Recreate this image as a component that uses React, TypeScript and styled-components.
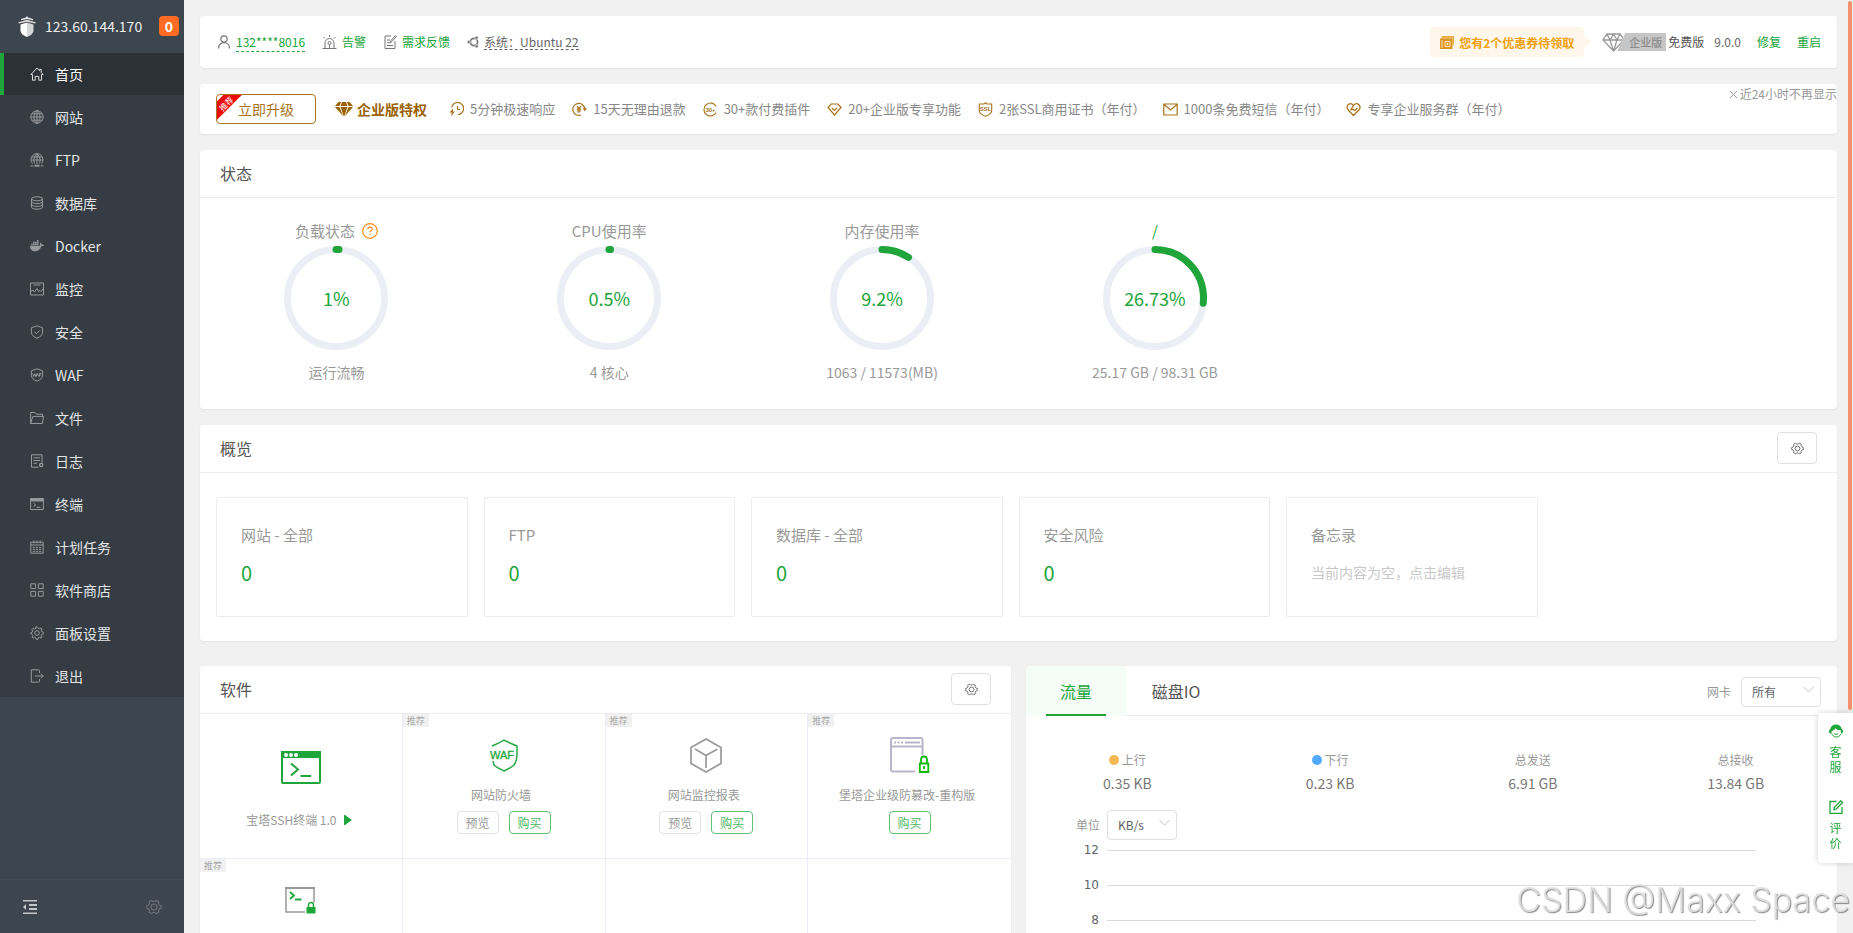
import React from "react";
import styled, { createGlobalStyle } from "styled-components";

const GREEN = "#20a53a";
const GOLD = "#a9741d";

const GlobalStyle = createGlobalStyle`
  * { box-sizing: border-box; }
  body {
    margin: 0;
    background: #f1f1f1;
    color: #666;
    font-family: "Noto Sans CJK SC", sans-serif;
    font-size: 12px;
    line-height: 20px;
  }
  button, select { font-family: inherit; margin: 0; }
  a { color: inherit; text-decoration: none; }
  svg { display: block; flex: none; }
  h2, ul, p { margin: 0; padding: 0; }
`;

/* ---------- icons ---------- */

type IconProps = { size?: number; children: React.ReactNode; sw?: number; box?: string };

const Line = ({ size = 14, sw = 1, box = "0 0 14 14", children }: IconProps) => (
  <svg width={size} height={size} viewBox={box} fill="none" stroke="currentColor" strokeWidth={sw} aria-hidden="true">
    {children}
  </svg>
);

const IconText = styled.text`
  fill: currentColor;
  stroke: none;
  font-family: "Liberation Sans", sans-serif;
  font-size: 6px;
  font-weight: 700;
  text-anchor: middle;
`;

const HexGear = ({ size = 14 }: { size?: number }) => (
  <Line size={size}>
    <path d="M5 1.2 6 2.2h2l1-1 2.2 1.3-.3 1.4 1 1.6 1.4.5v2l-1.4.5-1 1.6.3 1.4L9 12.8l-1-1H6l-1 1-2.2-1.3.3-1.4-1-1.6L.7 8V6l1.4-.5 1-1.6-.3-1.4z" />
    <circle cx="7" cy="7" r="2.6" />
  </Line>
);

const navIcons: Record<string, React.ReactNode> = {
  home: <Line><path d="M.8 7.6 7 1l2.6 2.7V2.4h1.6v3l2 2.2h-1.7v5.6H8.8V9.4H5.2v3.8H2.5V7.6z" /></Line>,
  site: <Line><circle cx="7" cy="7" r="6.2" /><ellipse cx="7" cy="7" rx="3" ry="6.2" /><path d="M7 .8v12.4M.8 7h12.4M1.8 3.8h10.4M1.8 10.2h10.4" /></Line>,
  ftp: <Line><path d="M2.4 10.500A6 6 0 1 1 11.6 10.500M4.600 10.500C3.200 7 4 3 7 1c3 2 3.800 6 2.400 9.500M7 1v10M1 7h12M2 4h10" /><path d="M.5 12.900h3M10.500 12.900h3" /><path d="M4.500 12.700h5" strokeWidth="2" /></Line>,
  db: <Line><ellipse cx="7" cy="2.800" rx="5.500" ry="2" /><path d="M1.500 2.800v8.400c0 1.100 2.500 2 5.500 2s5.500-.9 5.500-2V2.800M1.500 5.600c0 1.100 2.500 2 5.500 2s5.500-.9 5.500-2M1.500 8.400c0 1.100 2.500 2 5.500 2s5.500-.9 5.500-2" /></Line>,
  docker: (
    <svg width="14" height="14" viewBox="0 0 14 14" fill="currentColor" aria-hidden="true">
      <path d="M0 6.800h9.800c.5-.9.400-1.800 0-2.400l.6-.8c.8.500 1.200 1.200 1.200 1.900.8-.1 1.600 0 2.300.4-.5 1-1.500 1.400-2.600 1.400C10.200 10.600 8 12.300 5 12.300c-3.400 0-5-2.200-5-5.500z" />
      <path d="M1.200 4.700h1.600v1.600H1.200zM3.100 4.700h1.600v1.600H3.100zM5 4.700h1.600v1.600H5zM6.900 4.700h1.600v1.600H6.900zM3.100 2.800h1.600v1.600H3.100zM5 2.800h1.600v1.600H5zM6.900 2.800h1.600v1.600H6.900zM6.900.9h1.600v1.600H6.900z" />
    </svg>
  ),
  monitor: <Line><path d="M.5 1h13v12H.5zM3.500 3h7" /><path d="m1 9.500 2-1.500 1.500 2L7 6.500l1.500 3 1.500-1 1 1 2-2.500" /></Line>,
  security: <Line><path d="M7 .8 12.600 2.800v4.400c0 2.800-2.400 4.800-5.600 6-3.200-1.200-5.600-3.200-5.600-6V2.800z" /><path d="m4.500 6.800 2 1.900 3.300-3.300" /></Line>,
  waf: <Line><path d="M7 .8 12.600 2.800v4.400c0 2.800-2.400 4.800-5.600 6-3.200-1.200-5.600-3.200-5.600-6V2.800z" /><path d="m2.800 5.500.9 3 .9-2.600.9 2.600.9-3M6.300 8.500l1.100-3 1.100 3M9.400 8.800V5.500h2M9.400 7h1.800" /></Line>,
  folder: <Line><path d="M.6 12.500V1.500h4.500l1.400 1.700h6v2.200M.6 12.500 2.800 5.400h10.700l-1.100 7.100z" /></Line>,
  log: <Line><path d="M8.500 13.200H1.500V.8h10.500v8M3.500 3.800h6.500M3.500 6.500h6.500M3.500 9.200h3.500" /><circle cx="11.200" cy="11" r="1.600" strokeWidth="1.400" /></Line>,
  terminal: <Line><path d="M.6 1.500h12.800v11H.6z" /><path d="M.6 3h12.800" strokeWidth="3" /><path d="m3.500 6.300 2.200 1.700-2.200 1.700M6.500 10.300h4" /></Line>,
  cron: <Line><path d="M.8 2.200h12.400v11H.8zM3.800.4v3M10.200.4v3M7 .4v3M.8 5h12.400" /><path d="M2.800 7.400h8.400M2.800 9.400h8.400M2.800 11.400h8.400" strokeDasharray="2.200 .9" /></Line>,
  store: <Line><path d="M.8.800h4.800v4.800H.8zM8.400.800h4.800v4.800H8.400zM.8 8.400h4.800v4.800H.8zM8.400 8.400h4.800v4.800H8.400z" /></Line>,
  settings: <Line><circle cx="7" cy="7" r="2.300" /><path d="m5.700.9.3 1.500-1.500.7-1.400-.9-1.100 1.300.9 1.300-.6 1.400-1.500.4v1.300l1.500.4.600 1.400-.9 1.400 1.100 1.100 1.400-.9 1.500.7.3 1.400h1.600l.4-1.500 1.400-.6 1.400.9 1-1.200-.8-1.300.6-1.400 1.400-.4V6.100l-1.500-.4-.6-1.400.9-1.300-1.100-1.100-1.300.9-1.500-.7L7.300.9z" /></Line>,
  exit: <Line><path d="M9.500 4V1.500L8.700.8H1.300v12.400h7.400l.8-.7V10M5 7h8.300M11 4.700 13.300 7 11 9.300" /></Line>,
};

const perkIcons: Record<string, React.ReactNode> = {
  clock: <Line size={15} sw={1.200} box="0 0 15 15"><path d="M2.700 5.500A6 6 0 1 1 8.800 12.500" /><path d="M8.500 4v3.500h2.500" /><path d="M4 6.500 .6 10.500h2.200l-.8 4 3.800-5H4z" fill="currentColor" stroke="none" /></Line>,
  refund: <Line size={15} sw={1.200} box="0 0 15 15"><path d="M9 13A6 6 0 1 1 12.800 7.500" /><path d="m10.600 6.300 2.200 3 2.200-3z" fill="currentColor" stroke="none" /><path d="m5 4.200 1.900 2.500 1.900-2.500M4.700 7.200h4.400M4.700 9h4.400M6.900 6.700v4.200" /></Line>,
  plugins: <Line size={15} sw={1.100} box="0 0 15 15"><path d="M13.200 4.500A6.500 6.500 0 1 0 13.200 10.500" /><IconText x="7.500" y="9.700">30+</IconText></Line>,
  feature: <Line size={15} sw={1.200} box="0 0 15 15"><path d="M4 2h7l3 3.500L7.500 13 1 5.500zM5 6l2.500 2.500L10 6" /></Line>,
  ssl: <Line size={15} sw={1.100} box="0 0 15 15"><path d="M7.500.8 9 2h4.700v6.500c0 2.500-2.500 4.500-6.200 5.700C3.800 13 1.300 11 1.300 8.500V2H6z" /><IconText x="7.500" y="9">SSL</IconText></Line>,
  sms: <Line size={15} sw={1.200} box="0 0 15 15"><path d="M.8 2h13.400v11H.8zM1 2.500l6.500 5.500L14 2.500" /></Line>,
  group: <Line size={15} sw={1.300} box="0 0 15 15"><path d="M7.500 13.500 1.800 7.500C.4 5.500 1.200 2.500 3.600 1.800 5.300 1.400 6.500 2 7.500 3.500c1-1.500 2.500-2.100 4.200-1.600 2.200.7 3 3.600 1.600 5.600z" /><path d="M7.500 3.500 5 7.500h2.500l1.500 1 2.300-2.500" /></Line>,
};

const Lock = ({ x, y, color }: { x: number; y: number; color: string }) => (
  <g transform={`translate(${x} ${y})`}>
    <path d="M2.500 6V3.500a2.500 2.500 0 0 1 5 0V6" fill="none" stroke={color} strokeWidth="1.500" />
    <path d="M.500 5.500h9V12h-9z" fill={color} />
  </g>
);

const SshIcon = () => (
  <svg width="40" height="33" viewBox="0 0 40 33" aria-hidden="true">
    <rect x="1" y="1" width="38" height="31" rx="1" fill="#fff" stroke={GREEN} strokeWidth="2" />
    <path d="M0 0h40v7H0z" fill={GREEN} />
    <g fill="#fff"><circle cx="5" cy="4" r="2" /><circle cx="10" cy="4" r="2" /><circle cx="15" cy="4" r="2" /></g>
    <path d="m10 12.500 7 6-7 6M19.500 25h10.500" fill="none" stroke={GREEN} strokeWidth="2" />
  </svg>
);

const WafIcon = () => (
  <svg width="28" height="33" viewBox="0 0 28 33" aria-hidden="true">
    <path d="M2 7 9 4l5-3 6 3 7 3v9c0 4-1 7-3 10l-4 3-6 3-6-3-4-3-1-4" fill="none" stroke={GREEN} strokeWidth="1.400" />
    <text x="0" y="20" fill={GREEN} stroke={GREEN} strokeWidth=".3" fontFamily="Liberation Sans, sans-serif" fontSize="11">WAF</text>
  </svg>
);

const CubeIcon = () => (
  <svg width="32" height="35" viewBox="0 0 32 35" fill="none" stroke="#999" strokeWidth="1.700" aria-hidden="true">
    <path d="M16 1 31 9.500v16L16 34 1 25.500v-16zM5 11l11 6.500L27.500 11M16 17.500V30" />
  </svg>
);

const TamperIcon = () => (
  <svg width="40" height="36" viewBox="0 0 40 36" fill="none" aria-hidden="true">
    <path d="M32.500 18V3a2 2 0 0 0-2-2H3a2 2 0 0 0-2 2v29.500a2 2 0 0 0 2 2h22M1 9.500h31.500M15 5.500h15" stroke="#b9b5cb" strokeWidth="2" />
    <path d="M4 5.500h9" stroke="#b9b5cb" strokeWidth="2" strokeDasharray="2 1.500" />
    <path d="M31 26v-3.500a3 3 0 0 1 6 0V26M29.800 26.500h8.500V35h-8.500zM34 29v3" stroke="#12b812" strokeWidth="1.800" />
  </svg>
);

const SshLockIcon = () => (
  <svg width="31" height="27" viewBox="0 0 31 27" aria-hidden="true">
    <path d="M20 25H1V1h28v14" fill="none" stroke="#999" strokeWidth="1.500" />
    <path d="M0 1h30" stroke="#999" strokeWidth="2" />
    <path d="m5 5 4 3.500L5 12M10 12.500h6.500" fill="none" stroke={GREEN} strokeWidth="1.800" />
    <Lock x={21} y={14.500} color={GREEN} />
  </svg>
);

/* ---------- shell ---------- */

const Shell = styled.div`
  display: flex;
  height: 100vh;
  overflow: hidden;
`;

const Sidebar = styled.aside`
  flex: none;
  width: 184px;
  display: flex;
  flex-direction: column;
  background: #3d454e;
  color: #e6e6e6;
`;

const SideHead = styled.div`
  height: 53px;
  padding: 0 5px 1px 18px;
  display: flex;
  align-items: center;
  font-size: 14px;
  gap: 9px;
  color: #eee;
`;

const MsgCount = styled.button`
  width: 20px;
  height: 20px;
  margin-left: auto;
  padding: 0;
  border: 0;
  border-radius: 4px;
  background: #ff6b22;
  color: #fff;
  font-size: 14px;
  font-weight: 700;
  line-height: 20px;
`;

const NavList = styled.ul`
  list-style: none;
  background: #353c43;
  display: grid;
  gap: 1px;
`;

const NavLink = styled.a<{ $active?: boolean }>`
  display: flex;
  align-items: center;
  gap: 11px;
  height: 42px;
  padding-left: ${(p) => (p.$active ? 26 : 30)}px;
  border-left: ${(p) => (p.$active ? `4px solid ${GREEN}` : "0")};
  background: ${(p) => (p.$active ? "#2c3037" : "transparent")};
  color: ${(p) => (p.$active ? "#fff" : "#e3e5e6")};
  font-size: 14px;

  svg { color: ${(p) => (p.$active ? "#ddd" : "#969a9d")}; }
`;

const SideFoot = styled.div`
  margin-top: auto;
  height: 54px;
  padding: 0 22px;
  display: flex;
  align-items: center;
  justify-content: space-between;
  border-top: 1px solid #434c55;
`;

const PlainButton = styled.button<{ $color?: string }>`
  display: flex;
  align-items: center;
  padding: 0;
  border: 0;
  background: none;
  color: ${(p) => p.$color ?? "inherit"};
  font-size: 12px;
  line-height: 20px;
`;

const Main = styled.main`
  flex: 1;
  min-width: 0;
  padding: 16px 16px 0;
  display: flex;
  flex-direction: column;
  gap: 16px;
  overflow: hidden;
`;

const Card = styled.section`
  background: #fff;
  border-radius: 4px;
  box-shadow: 0 1px 2px rgba(0, 0, 0, 0.06);
`;

const CardHead = styled.header`
  display: flex;
  align-items: center;
  justify-content: space-between;
  height: 48px;
  padding: 0 20px 1px;
  border-bottom: 1px solid #ececec;
`;

const CardTitle = styled.h2`
  font-size: 16px;
  line-height: 24px;
  font-weight: 400;
  color: #555;
`;

const GearButton = styled.button`
  width: 40px;
  height: 32px;
  display: flex;
  align-items: center;
  justify-content: center;
  border: 1px solid #dcdfe6;
  border-radius: 4px;
  background: #fff;
  color: #666;
`;

/* ---------- top bar ---------- */

const TopBar = styled(Card)`
  height: 52px;
  flex: none;
  display: flex;
  align-items: center;
  justify-content: space-between;
  padding: 0 16px 0 17px;
`;

const TopGroup = styled.div<{ $gap: number }>`
  display: flex;
  align-items: center;
  gap: ${(p) => p.$gap}px;
`;

const TopItem = styled.a<{ $color?: string }>`
  display: flex;
  align-items: center;
  gap: 5px;
  color: ${(p) => p.$color ?? GREEN};

  svg { color: #777; }
`;

const Dashed = styled.span<{ $low?: boolean }>`
  line-height: ${(p) => (p.$low ? 18 : 14)}px;
  border-bottom: 1px dashed currentColor;
`;

const Coupon = styled.button`
  position: relative;
  display: flex;
  align-items: center;
  gap: 5px;
  height: 30px;
  margin-right: 18px;
  padding: 0 10px;
  border: 0;
  border-radius: 4px;
  background: #fff7ec;
  color: #f0a10c;
  font-size: 12px;
  font-weight: 700;

  &::after {
    content: "";
    position: absolute;
    left: 100%;
    top: 9px;
    border: 6px solid transparent;
    border-left: 8px solid #fff7ec;
    border-right: 0;
  }
`;

const Edition = styled.div`
  display: flex;
  align-items: center;
  margin-right: 10px;
  color: #555;
`;

const EditionTag = styled.span`
  height: 18px;
  margin: 0 2px 0 -8px;
  padding: 0 4px 0 12px;
  background: #c6c6c6;
  clip-path: polygon(8px 0, 100% 0, 100% 100%, 0 100%);
  color: #8c8c8c;
  font-size: 11px;
  font-weight: 500;
  line-height: 18px;
`;

/* ---------- promotion ---------- */

const Promo = styled(Card)`
  height: 50px;
  flex: none;
  display: flex;
  align-items: center;
  padding-left: 16px;
`;

const Upgrade = styled.button`
  position: relative;
  width: 100px;
  height: 30px;
  margin-right: 19px;
  padding: 0;
  border: 1px solid ${GOLD};
  border-radius: 4px;
  background: linear-gradient(135deg, transparent 4px, #ec0c0c 5px, #ec0c0c 17px, transparent 18px) #fff;
  color: ${GOLD};
  font-size: 14px;
`;

const Ribbon = styled.span`
  position: absolute;
  left: 0;
  top: 4px;
  width: 18px;
  color: #fff;
  font-size: 8px;
  line-height: 9px;
  text-align: center;
  transform: rotate(-45deg);
`;

const PromoTitle = styled.strong`
  display: flex;
  align-items: center;
  gap: 4px;
  margin-right: 22px;
  font-size: 14px;
  color: #9a6200;
`;

const Perks = styled.ul`
  display: flex;
  gap: 17px;
  list-style: none;
  white-space: nowrap;
`;

const Perk = styled.li`
  display: flex;
  align-items: center;
  gap: 6px;
  font-size: 13px;
  line-height: 22px;
  color: #888;

  svg { color: ${GOLD}; }
`;

const Dismiss = styled(PlainButton)`
  align-self: flex-start;
  margin-left: auto;
  gap: 2px;
  white-space: nowrap;
`;

/* ---------- status ---------- */

const StatusGrid = styled.div`
  display: grid;
  grid-template-columns: repeat(6, 1fr);
  padding: 23px 0 27px;
`;

const Gauge = styled.div`
  display: flex;
  flex-direction: column;
  align-items: center;
  color: #999;
`;

const GaugeTitle = styled.div<{ $link?: boolean }>`
  display: flex;
  align-items: center;
  gap: 7px;
  font-size: 15px;
  color: ${(p) => (p.$link ? GREEN : "#999")};

  button { color: #fa8c16; }
`;

const RingBox = styled.div`
  display: grid;
  place-items: center;
  margin: 5px 0 12px;

  & > * { grid-area: 1 / 1; }
`;

const RingValue = styled.span`
  font-size: 18px;
  line-height: 24px;
  color: ${GREEN};
`;

const GaugeNote = styled.div`
  font-size: 14px;
`;

const Ring = ({ value }: { value: number }) => (
  <RingBox>
    <svg width="104" height="104" viewBox="0 0 104 104" fill="none" strokeWidth="7" aria-hidden="true">
      <circle cx="52" cy="52" r="48.500" stroke="#ebeef5" />
      <circle cx="52" cy="52" r="48.500" stroke={GREEN} strokeLinecap="round" pathLength={100} strokeDasharray={`${value} 100`} transform="rotate(-90 52 52)" />
    </svg>
    <RingValue>{value}%</RingValue>
  </RingBox>
);

/* ---------- overview ---------- */

const OverviewGrid = styled.div`
  display: grid;
  grid-template-columns: repeat(6, 1fr);
  gap: 16px;
  padding: 24px 32px 24px 16px;
`;

const Tile = styled.div`
  height: 120px;
  padding: 27px 24px;
  border: 1px solid #ececec;
  border-radius: 2px;
  font-size: 15px;
  color: #999;
`;

const TileValue = styled.a`
  display: block;
  margin-top: 14px;
  font-size: 20px;
  line-height: 28px;
  color: ${GREEN};
`;

const TileHint = styled.p`
  margin-top: 17px;
  font-size: 14px;
  color: #c8c8c8;
`;

/* ---------- bottom row ---------- */

const BottomRow = styled.div`
  flex: 1;
  min-height: 260px;
  margin-top: 9px;
  display: grid;
  grid-template-columns: 1fr 1fr;
  gap: 15px;
`;

const HalfCard = styled(Card)`
  display: flex;
  flex-direction: column;
  min-width: 0;
  border-radius: 4px 4px 0 0;
`;

const AppGrid = styled.div`
  flex: 1;
  display: grid;
  grid-template-columns: repeat(4, 1fr);
  grid-template-rows: 145px 1fr;
`;

const AppCell = styled.div<{ $tall?: boolean }>`
  position: relative;
  display: flex;
  flex-direction: column;
  align-items: center;
  padding-top: ${(p) => (p.$tall ? 35 : 23)}px;
  border-right: 1px solid #ebebfb;
  border-bottom: 1px solid #ebebfb;

  &:nth-child(4n) { border-right: 0; }
  &:nth-child(n + 5) { border-bottom: 0; }
`;

const Badge = styled.span`
  position: absolute;
  left: 0;
  top: 0;
  width: 26px;
  height: 13px;
  background: #f1f1f1;
  color: #aaa;
  font-size: 9px;
  line-height: 13px;
  text-align: center;
`;

const AppIcon = styled.div`
  height: 36px;
  display: flex;
  align-items: center;
`;

const AppName = styled.div<{ $tall?: boolean }>`
  display: flex;
  align-items: center;
  gap: 8px;
  margin-top: ${(p) => (p.$tall ? 25 : 12)}px;
  padding-right: ${(p) => (p.$tall ? 3 : 5)}px;
  color: #999;
  white-space: nowrap;
`;

const AppActions = styled.div`
  display: flex;
  gap: 10px;
  margin-top: 6px;
`;

const SmallButton = styled.button<{ $buy?: boolean }>`
  width: 42px;
  height: 23px;
  padding: 0;
  border: 1px solid ${(p) => (p.$buy ? "#5fbf72" : "#e2e2e6")};
  border-radius: 4px;
  background: #fff;
  color: ${(p) => (p.$buy ? "#4db862" : "#999")};
  font-size: 12px;
  line-height: 20px;
`;

const TabHead = styled.header`
  display: flex;
  height: 50px;
  flex: none;
  padding-right: 16px;
  border-bottom: 1px solid #e9ecee;
`;

const Tab = styled.button<{ $active?: boolean }>`
  width: 100px;
  height: 50px;
  padding: 0 20px;
  border: 0;
  border-radius: 4px 0 0 0;
  background: ${(p) => (p.$active ? "#f6fcf8" : "transparent")};
  color: ${(p) => (p.$active ? GREEN : "#555")};
  font-size: 16px;

  span {
    display: block;
    height: 50px;
    line-height: 50px;
    border-bottom: 2px solid ${(p) => (p.$active ? GREEN : "transparent")};
  }
`;

const Field = styled.label<{ $gap: number; $right?: boolean }>`
  display: flex;
  align-items: center;
  gap: ${(p) => p.$gap}px;
  margin-left: ${(p) => (p.$right ? "auto" : "0")};
  padding-top: ${(p) => (p.$right ? "2px" : "0")};
  color: #999;
`;

const SelectWrap = styled.span<{ $width: number }>`
  position: relative;
  width: ${(p) => p.$width}px;

  select {
    appearance: none;
    display: block;
    width: 100%;
    height: 30px;
    padding: 0 10px;
    border: 1px solid #dcdfe6;
    border-radius: 4px;
    background: #fff;
    color: #606266;
    font-size: 12px;
    line-height: 20px;
  }

  svg {
    position: absolute;
    right: 7px;
    top: 9px;
    color: #c0c4cc;
    pointer-events: none;
  }
`;

const Select = ({ width, option }: { width: number; option: string }) => (
  <SelectWrap $width={width}>
    <select defaultValue={option}><option>{option}</option></select>
    <svg width="11" height="8" viewBox="0 0 11 8" fill="none" stroke="currentColor" aria-hidden="true"><path d="m.5 1 5 5 5-5" /></svg>
  </SelectWrap>
);

const Stats = styled.div`
  display: grid;
  grid-template-columns: repeat(4, 1fr);
  padding: 34px 0 17px;
  text-align: center;
`;

const StatLabel = styled.div`
  display: flex;
  align-items: center;
  justify-content: center;
  gap: 3px;
  color: #999;
`;

const Dot = styled.i<{ $color: string }>`
  width: 10px;
  height: 10px;
  border-radius: 50%;
  background: ${(p) => p.$color};
`;

const StatValue = styled.div`
  margin-top: 3px;
  font-size: 14px;
  color: #777;
`;

const UnitRow = styled.div`
  padding-left: 50px;
`;

const Chart = styled.div`
  display: grid;
  gap: 15px;
  padding-right: 10%;
`;

const ChartRow = styled.div`
  display: flex;
  align-items: center;
  gap: 8px;
  height: 20px;
  color: #606266;
  font-family: "DejaVu Sans", sans-serif;

  span { width: 73px; text-align: right; }
  &::after { content: ""; flex: 1; height: 1px; background: #d9dadc; }
`;

/* ---------- overlays ---------- */

const ScrollThumb = styled.div`
  position: fixed;
  right: 1px;
  top: 1px;
  width: 4px;
  height: 76%;
  border-radius: 2px;
  background: #f5906c;
`;

const Dock = styled.nav`
  position: fixed;
  right: 0;
  bottom: 70px;
  width: 35px;
  padding: 11px 0 12px;
  display: grid;
  gap: 25px;
  background: #fff;
  border-radius: 4px 0 0 4px;
  box-shadow: 0 0 6px rgba(0, 0, 0, 0.18);
`;

const DockLink = styled.a`
  display: flex;
  flex-direction: column;
  align-items: center;
  gap: 6px;
  color: ${GREEN};
  line-height: 15px;

  span { width: 12px; margin-bottom: 1px; }
`;

const Watermark = styled.div`
  position: fixed;
  right: 3px;
  bottom: 10px;
  font-family: Inter, sans-serif;
  font-size: 34px;
  line-height: 46px;
  font-weight: 300;
  color: rgba(225, 225, 225, 0.9);
  text-shadow: 1px 1px 1px rgba(90, 90, 90, 0.7);
  pointer-events: none;
  white-space: nowrap;
`;

/* ---------- data ---------- */

const nav = [
  ["home", "首页"], ["site", "网站"], ["ftp", "FTP"], ["db", "数据库"], ["docker", "Docker"],
  ["monitor", "监控"], ["security", "安全"], ["waf", "WAF"], ["folder", "文件"], ["log", "日志"],
  ["terminal", "终端"], ["cron", "计划任务"], ["store", "软件商店"], ["settings", "面板设置"], ["exit", "退出"],
];

const perks = [
  ["clock", "5分钟极速响应"], ["refund", "15天无理由退款"], ["plugins", "30+款付费插件"],
  ["feature", "20+企业版专享功能"], ["ssl", "2张SSL商用证书（年付）"], ["sms", "1000条免费短信（年付）"],
  ["group", "专享企业服务群（年付）"],
];

const gauges = [
  { title: "负载状态", value: 1, note: "运行流畅", help: true },
  { title: "CPU使用率", value: 0.5, note: "4 核心" },
  { title: "内存使用率", value: 9.2, note: "1063 / 11573(MB)" },
  { title: "/", value: 26.73, note: "25.17 GB / 98.31 GB", link: true },
];

const tiles = ["网站 - 全部", "FTP", "数据库 - 全部", "安全风险"];

const apps = [
  { name: "网站防火墙", icon: <WafIcon />, preview: true },
  { name: "网站监控报表", icon: <CubeIcon />, preview: true },
  { name: "堡塔企业级防篡改-重构版", icon: <TamperIcon />, preview: false },
];

const stats = [
  { label: "上行", value: "0.35 KB", color: "#f7b851" },
  { label: "下行", value: "0.23 KB", color: "#52a9ff" },
  { label: "总发送", value: "6.91 GB" },
  { label: "总接收", value: "13.84 GB" },
];

export default function App() {
  return (
    <Shell>
      <GlobalStyle />
      <Sidebar>
        <SideHead>
          <svg width="18" height="21" viewBox="0 0 18 21" aria-hidden="true">
            <path d="M9 0 10 1.500 15 3v1.200L9 3 3 4.200V3l5-1.500z" fill="#eee" />
            <path d="M0 6.500 9 3.800l9 2.700-1 1L9 5.700 1 7.500z" fill="#ddd" />
            <path d="m2.500 8.500 6.500-2v14.500c-4-1.500-6-3.500-6.500-6z" fill="#fff" />
            <path d="m15.500 8.500-6.500-2v14.500c4-1.500 6-3.500 6.500-6z" fill="#d4d6d8" />
          </svg>
          <span>123.60.144.170</span>
          <MsgCount>0</MsgCount>
        </SideHead>
        <nav>
          <NavList>
            {nav.map(([icon, text], i) => (
              <li key={icon}>
                <NavLink href="#" $active={i === 0}>{navIcons[icon]}{text}</NavLink>
              </li>
            ))}
          </NavList>
        </nav>
        <SideFoot>
          <PlainButton aria-label="收起菜单">
            <svg width="16" height="16" viewBox="0 0 16 16" fill="#c3c7ca" aria-hidden="true">
              <path d="M1 1h14v1.500H1zM7 5h8v2H7zM7 9h8v2H7zM1 13.500h14V15H1zM4 5v6L1 8z" />
            </svg>
          </PlainButton>
          <PlainButton aria-label="设置" $color="#6b7178"><HexGear size={16} /></PlainButton>
        </SideFoot>
      </Sidebar>

      <Main>
        <TopBar>
          <TopGroup $gap={17}>
            <TopItem href="#">
              <Line size={14} sw={1.200}><circle cx="7" cy="4" r="3.200" /><path d="M1.500 13.500C1.500 10 4 7.700 7 7.700s5.500 2.300 5.500 5.800" /></Line>
              <Dashed $low>132****8016</Dashed>
            </TopItem>
            <TopItem href="#">
              <Line size={15} box="0 0 15 15"><path d="M3 13V8a4.500 4.500 0 0 1 9 0v5M.5 13.500h14M7.500 0v2M1.500 2 3 3.500M13.500 2 12 3.500M7.500 9.500V13" /><circle cx="7.500" cy="8" r="1.500" /></Line>
              告警
            </TopItem>
            <TopItem href="#">
              <Line size={14}><path d="M8 1H2v12.500h10V6M4 5h3M4 7.700h3.500M4 10.500h6M7.500 7.500 8 5.500 12.500.5l1 .8L9 6.500z" /></Line>
              需求反馈
            </TopItem>
            <TopItem href="#" $color="#666">
              <Line size={12} sw={1.700} box="0 0 12 12"><circle cx="7" cy="6" r="3.600" /><g fill="currentColor" stroke="#fff" strokeWidth=".6"><circle cx="1.700" cy="6" r="1.700" /><circle cx="9.600" cy="1.800" r="1.700" /><circle cx="9.600" cy="10.200" r="1.700" /></g></Line>
              <Dashed>系统：Ubuntu 22</Dashed>
            </TopItem>
          </TopGroup>
          <TopGroup $gap={0}>
            <Coupon>
              <svg width="14" height="13" viewBox="0 0 14 13" aria-hidden="true">
                <path d="M1 2.500 2 0h12v9h-1.500V2.500z" fill="#eab04a" />
                <path d="M0 2.500h12.500V13H0z" fill="#dc9420" />
                <path d="M5 5.500h5v5H5zM2 4v8" fill="none" stroke="#fff1d6" strokeWidth=".9" />
                <circle cx="7.500" cy="8" r="1" fill="#fff1d6" />
              </svg>
              您有2个优惠券待领取
            </Coupon>
            <Edition>
              <svg width="23" height="19" viewBox="0 0 23 19" fill="none" stroke="#999" strokeWidth="1.300" aria-hidden="true">
                <path d="M5 1h13l4 6-10.500 11L1 7zM1 7h21M5 1l3 6 3.500 11L15 7l3-6M8 7l3.500-6L15 7" />
              </svg>
              <EditionTag>企业版</EditionTag>
              免费版
            </Edition>
            <TopGroup $gap={16}>
              <span>9.0.0</span>
              <PlainButton $color={GREEN}>修复</PlainButton>
              <PlainButton $color={GREEN}>重启</PlainButton>
            </TopGroup>
          </TopGroup>
        </TopBar>

        <Promo>
          <Upgrade><Ribbon>推荐</Ribbon>立即升级</Upgrade>
          <PromoTitle>
            <svg width="18" height="15" viewBox="0 0 18 15" fill="#9a6200" aria-hidden="true">
              <path d="M3.500 0H6L4.500 4H0zM7 0h4l1.500 4h-7zM12 0h2.500L18 4h-4.500zM0 5h4.500L8 14zM5.500 5h7L9 15zM13.500 5H18l-8 9z" />
            </svg>
            企业版特权
          </PromoTitle>
          <Perks>
            {perks.map(([icon, text]) => <Perk key={icon}>{perkIcons[icon]}{text}</Perk>)}
          </Perks>
          <Dismiss $color="#999">
            <svg width="9" height="9" viewBox="0 0 9 9" stroke="currentColor" aria-hidden="true"><path d="m1 1 7 7M8 1 1 8" /></svg>
            近24小时不再显示
          </Dismiss>
        </Promo>

        <Card>
          <CardHead><CardTitle>状态</CardTitle></CardHead>
          <StatusGrid>
            {gauges.map((g) => (
              <Gauge key={g.title}>
                <GaugeTitle $link={g.link}>
                  {g.title}
                  {g.help && (
                    <PlainButton aria-label="帮助">
                      <Line size={16} sw={1.200} box="0 0 16 16"><circle cx="8" cy="8" r="7.300" /><path d="M5.800 6.300C5.800 5 6.800 4.200 8 4.200s2.200.8 2.200 2c0 1.500-2.200 1.600-2.200 3.300M8 10.700v1.300" /></Line>
                    </PlainButton>
                  )}
                </GaugeTitle>
                <Ring value={g.value} />
                <GaugeNote>{g.note}</GaugeNote>
              </Gauge>
            ))}
          </StatusGrid>
        </Card>

        <Card>
          <CardHead>
            <CardTitle>概览</CardTitle>
            <GearButton aria-label="概览设置"><HexGear size={13} /></GearButton>
          </CardHead>
          <OverviewGrid>
            {tiles.map((t) => <Tile key={t}>{t}<TileValue href="#">0</TileValue></Tile>)}
            <Tile>备忘录<TileHint>当前内容为空，点击编辑</TileHint></Tile>
          </OverviewGrid>
        </Card>

        <BottomRow>
          <HalfCard>
            <CardHead>
              <CardTitle>软件</CardTitle>
              <GearButton aria-label="软件设置"><HexGear size={13} /></GearButton>
            </CardHead>
            <AppGrid>
              <AppCell $tall>
                <AppIcon><SshIcon /></AppIcon>
                <AppName $tall>
                  宝塔SSH终端 1.0
                  <svg width="8" height="12" viewBox="0 0 8 12" fill={GREEN} aria-hidden="true"><path d="M0 1h1l7 5-7 5H0z" /></svg>
                </AppName>
              </AppCell>
              {apps.map((a) => (
                <AppCell key={a.name}>
                  <Badge>推荐</Badge>
                  <AppIcon>{a.icon}</AppIcon>
                  <AppName>{a.name}</AppName>
                  <AppActions>
                    {a.preview && <SmallButton>预览</SmallButton>}
                    <SmallButton $buy>购买</SmallButton>
                  </AppActions>
                </AppCell>
              ))}
              <AppCell><Badge>推荐</Badge><AppIcon><SshLockIcon /></AppIcon></AppCell>
              <AppCell /><AppCell /><AppCell />
            </AppGrid>
          </HalfCard>

          <HalfCard>
            <TabHead>
              <Tab $active><span>流量</span></Tab>
              <Tab><span>磁盘IO</span></Tab>
              <Field $gap={10} $right>网卡<Select width={80} option="所有" /></Field>
            </TabHead>
            <Stats>
              {stats.map((s) => (
                <div key={s.label}>
                  <StatLabel>{s.color && <Dot $color={s.color} />}{s.label}</StatLabel>
                  <StatValue>{s.value}</StatValue>
                </div>
              ))}
            </Stats>
            <UnitRow><Field $gap={7}>单位<Select width={70} option="KB/s" /></Field></UnitRow>
            <Chart>
              {[12, 10, 8].map((n) => <ChartRow key={n}><span>{n}</span></ChartRow>)}
            </Chart>
          </HalfCard>
        </BottomRow>
      </Main>

      <ScrollThumb />
      <Watermark>CSDN @Maxx Space</Watermark>
      <Dock>
        <DockLink href="#">
          <svg width="14" height="14" viewBox="0 0 14 14" aria-hidden="true">
            <path d="M7 .5a6 6 0 0 1 5.800 4.700c1 .4 1.200 1.200 1.200 2.300s-.6 2-1.700 2.200L11.500 6C9 6 7.500 5.500 6.500 4.200 5.800 5.500 4.300 6.500 2.800 7l-.6 2.700C.8 9.500 0 8.500 0 7.500S.4 5.500 1.200 5.200A6 6 0 0 1 7 .5z" fill={GREEN} />
            <path d="M2.800 9.500C3.500 11.500 5 12.700 7 13s4-1 4.800-3M4.800 9.500c1.200 1 3.200 1 4.400 0" fill="none" stroke={GREEN} />
          </svg>
          <span>客服</span>
        </DockLink>
        <DockLink href="#">
          <Line sw={1.300}><path d="M7.500 1.500H1v12h12V7M5 9.800l.4-2.600L11.800.8l1.700 1.700L7.200 9z" /></Line>
          <span>评价</span>
        </DockLink>
      </Dock>
    </Shell>
  );
}
